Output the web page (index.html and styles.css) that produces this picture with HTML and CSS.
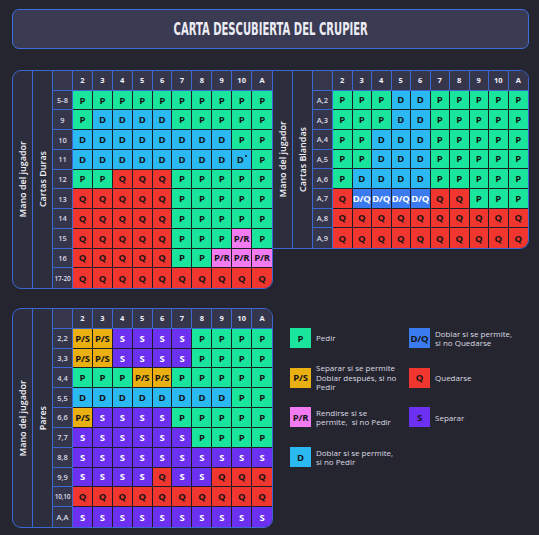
FILE: index.html
```html
<!DOCTYPE html>
<html lang="es">
<head>
<meta charset="utf-8">
<title>Carta descubierta del crupier</title>
<link rel="stylesheet" href="styles.css">
</head>
<body>
<div class="page">
  <header class="title"><h1>CARTA DESCUBIERTA DEL CRUPIER</h1></header>

  <section class="top">
    <div class="panel hard">
      <div class="lab"><span>Mano del jugador</span></div>
      <div class="lab"><span>Cartas Duras</span></div>
      <div class="grid">
        <span class="h"></span><span class="h">2</span><span class="h">3</span><span class="h">4</span><span class="h">5</span><span class="h">6</span><span class="h">7</span><span class="h">8</span><span class="h">9</span><span class="h">10</span><span class="h">A</span>
        <span class="h rh">5-8</span><span class="p">P</span><span class="p">P</span><span class="p">P</span><span class="p">P</span><span class="p">P</span><span class="p">P</span><span class="p">P</span><span class="p">P</span><span class="p">P</span><span class="p">P</span>
        <span class="h rh">9</span><span class="p">P</span><span class="d">D</span><span class="d">D</span><span class="d">D</span><span class="d">D</span><span class="p">P</span><span class="p">P</span><span class="p">P</span><span class="p">P</span><span class="p">P</span>
        <span class="h rh">10</span><span class="d">D</span><span class="d">D</span><span class="d">D</span><span class="d">D</span><span class="d">D</span><span class="d">D</span><span class="d">D</span><span class="d">D</span><span class="p">P</span><span class="p">P</span>
        <span class="h rh">11</span><span class="d">D</span><span class="d">D</span><span class="d">D</span><span class="d">D</span><span class="d">D</span><span class="d">D</span><span class="d">D</span><span class="d">D</span><span class="d">D<em class="dot"></em></span><span class="p">P</span>
        <span class="h rh">12</span><span class="p">P</span><span class="p">P</span><span class="q">Q</span><span class="q">Q</span><span class="q">Q</span><span class="p">P</span><span class="p">P</span><span class="p">P</span><span class="p">P</span><span class="p">P</span>
        <span class="h rh">13</span><span class="q">Q</span><span class="q">Q</span><span class="q">Q</span><span class="q">Q</span><span class="q">Q</span><span class="p">P</span><span class="p">P</span><span class="p">P</span><span class="p">P</span><span class="p">P</span>
        <span class="h rh">14</span><span class="q">Q</span><span class="q">Q</span><span class="q">Q</span><span class="q">Q</span><span class="q">Q</span><span class="p">P</span><span class="p">P</span><span class="p">P</span><span class="p">P</span><span class="p">P</span>
        <span class="h rh">15</span><span class="q">Q</span><span class="q">Q</span><span class="q">Q</span><span class="q">Q</span><span class="q">Q</span><span class="p">P</span><span class="p">P</span><span class="p">P</span><span class="r">P/R</span><span class="p">P</span>
        <span class="h rh">16</span><span class="q">Q</span><span class="q">Q</span><span class="q">Q</span><span class="q">Q</span><span class="q">Q</span><span class="p">P</span><span class="p">P</span><span class="r">P/R</span><span class="r">P/R</span><span class="r">P/R</span>
        <span class="h rh sm">17-20</span><span class="q">Q</span><span class="q">Q</span><span class="q">Q</span><span class="q">Q</span><span class="q">Q</span><span class="q">Q</span><span class="q">Q</span><span class="q">Q</span><span class="q">Q</span><span class="q">Q</span>
      </div>
    </div>

    <div class="panel soft">
      <div class="lab"><span>Mano del jugador</span></div>
      <div class="lab"><span>Cartas Blandas</span></div>
      <div class="grid">
        <span class="h"></span><span class="h">2</span><span class="h">3</span><span class="h">4</span><span class="h">5</span><span class="h">6</span><span class="h">7</span><span class="h">8</span><span class="h">9</span><span class="h">10</span><span class="h">A</span>
        <span class="h rh">A,2</span><span class="p">P</span><span class="p">P</span><span class="p">P</span><span class="d">D</span><span class="d">D</span><span class="p">P</span><span class="p">P</span><span class="p">P</span><span class="p">P</span><span class="p">P</span>
        <span class="h rh">A,3</span><span class="p">P</span><span class="p">P</span><span class="p">P</span><span class="d">D</span><span class="d">D</span><span class="p">P</span><span class="p">P</span><span class="p">P</span><span class="p">P</span><span class="p">P</span>
        <span class="h rh">A,4</span><span class="p">P</span><span class="p">P</span><span class="d">D</span><span class="d">D</span><span class="d">D</span><span class="p">P</span><span class="p">P</span><span class="p">P</span><span class="p">P</span><span class="p">P</span>
        <span class="h rh">A,5</span><span class="p">P</span><span class="p">P</span><span class="d">D</span><span class="d">D</span><span class="d">D</span><span class="p">P</span><span class="p">P</span><span class="p">P</span><span class="p">P</span><span class="p">P</span>
        <span class="h rh">A,6</span><span class="p">P</span><span class="d">D</span><span class="d">D</span><span class="d">D</span><span class="d">D</span><span class="p">P</span><span class="p">P</span><span class="p">P</span><span class="p">P</span><span class="p">P</span>
        <span class="h rh">A,7</span><span class="q">Q</span><span class="b">D/Q</span><span class="b">D/Q</span><span class="b">D/Q</span><span class="b">D/Q</span><span class="q">Q</span><span class="q">Q</span><span class="p">P</span><span class="p">P</span><span class="p">P</span>
        <span class="h rh">A,8</span><span class="q">Q</span><span class="q">Q</span><span class="q">Q</span><span class="q">Q</span><span class="q">Q</span><span class="q">Q</span><span class="q">Q</span><span class="q">Q</span><span class="q">Q</span><span class="q">Q</span>
        <span class="h rh">A,9</span><span class="q">Q</span><span class="q">Q</span><span class="q">Q</span><span class="q">Q</span><span class="q">Q</span><span class="q">Q</span><span class="q">Q</span><span class="q">Q</span><span class="q">Q</span><span class="q">Q</span>
      </div>
    </div>
  </section>

  <section class="bottom">
    <div class="panel pairs">
      <div class="lab"><span>Mano del jugador</span></div>
      <div class="lab"><span>Pares</span></div>
      <div class="grid">
        <span class="h"></span><span class="h">2</span><span class="h">3</span><span class="h">4</span><span class="h">5</span><span class="h">6</span><span class="h">7</span><span class="h">8</span><span class="h">9</span><span class="h">10</span><span class="h">A</span>
        <span class="h rh">2,2</span><span class="y">P/S</span><span class="y">P/S</span><span class="s">S</span><span class="s">S</span><span class="s">S</span><span class="s">S</span><span class="p">P</span><span class="p">P</span><span class="p">P</span><span class="p">P</span>
        <span class="h rh">3,3</span><span class="y">P/S</span><span class="y">P/S</span><span class="s">S</span><span class="s">S</span><span class="s">S</span><span class="s">S</span><span class="p">P</span><span class="p">P</span><span class="p">P</span><span class="p">P</span>
        <span class="h rh">4,4</span><span class="p">P</span><span class="p">P</span><span class="p">P</span><span class="y">P/S</span><span class="y">P/S</span><span class="p">P</span><span class="p">P</span><span class="p">P</span><span class="p">P</span><span class="p">P</span>
        <span class="h rh">5,5</span><span class="d">D</span><span class="d">D</span><span class="d">D</span><span class="d">D</span><span class="d">D</span><span class="d">D</span><span class="d">D</span><span class="d">D</span><span class="p">P</span><span class="p">P</span>
        <span class="h rh">6,6</span><span class="y">P/S</span><span class="s">S</span><span class="s">S</span><span class="s">S</span><span class="s">S</span><span class="p">P</span><span class="p">P</span><span class="p">P</span><span class="p">P</span><span class="p">P</span>
        <span class="h rh">7,7</span><span class="s">S</span><span class="s">S</span><span class="s">S</span><span class="s">S</span><span class="s">S</span><span class="s">S</span><span class="p">P</span><span class="p">P</span><span class="p">P</span><span class="p">P</span>
        <span class="h rh">8,8</span><span class="s">S</span><span class="s">S</span><span class="s">S</span><span class="s">S</span><span class="s">S</span><span class="s">S</span><span class="s">S</span><span class="s">S</span><span class="s">S</span><span class="s">S</span>
        <span class="h rh">9,9</span><span class="s">S</span><span class="s">S</span><span class="s">S</span><span class="s">S</span><span class="q">Q</span><span class="s">S</span><span class="s">S</span><span class="q">Q</span><span class="q">Q</span><span class="q">Q</span>
        <span class="h rh sm">10,10</span><span class="q">Q</span><span class="q">Q</span><span class="q">Q</span><span class="q">Q</span><span class="q">Q</span><span class="q">Q</span><span class="q">Q</span><span class="q">Q</span><span class="q">Q</span><span class="q">Q</span>
        <span class="h rh">A,A</span><span class="s">S</span><span class="s">S</span><span class="s">S</span><span class="s">S</span><span class="s">S</span><span class="s">S</span><span class="s">S</span><span class="s">S</span><span class="s">S</span><span class="s">S</span>
      </div>
    </div>

    <div class="legend">
      <div class="item"><span class="key p">P</span><p>Pedir</p></div>
      <div class="item"><span class="key b">D/Q</span><p>Doblar si se permite,<br>si no Quedarse</p></div>
      <div class="item"><span class="key y">P/S</span><p>Separar si se permite<br>Doblar después, si no<br>Pedir</p></div>
      <div class="item"><span class="key q">Q</span><p>Quedarse</p></div>
      <div class="item"><span class="key r">P/R</span><p>Rendirse si se<br>permite,&nbsp; si no Pedir</p></div>
      <div class="item"><span class="key s">S</span><p>Separar</p></div>
      <div class="item"><span class="key d">D</span><p>Doblar si se permite,<br>si no Pedir</p></div>
    </div>
  </section>
</div>
</body>
</html>
```

FILE: styles.css
```css
* { box-sizing: border-box; margin: 0; padding: 0; }

body {
  background: #25252f;
  font-family: "Open Sans", "Noto Sans", sans-serif;
  color: #e4e4ec;
}

.page {
  width: 539px;
  padding: 9px 10px 0 12px;
}

.title {
  height: 40px;
  border: 1px solid #3d6fe0;
  border-radius: 7px;
  background: #3a3a52;
  display: flex;
  align-items: center;
  justify-content: center;
}

.title h1 {
  font-family: "DejaVu Sans Condensed", "DejaVu Sans", sans-serif;
  font-stretch: condensed;
  font-weight: 700;
  font-size: 18px;
  line-height: 1;
  color: #ececf4;
  white-space: nowrap;
  transform: scaleX(0.62);
}

.top {
  display: flex;
  align-items: flex-start;
  margin-top: 21px;
}

.bottom {
  display: flex;
  align-items: flex-start;
  margin-top: 19px;
}

.panel {
  display: flex;
  border: 1px solid #3b67d2;
  background: #2c2d3d;
  overflow: hidden;
}

.hard {
  width: 261px;
  height: 219px;
  border-radius: 9px 0 9px 9px;
}

.soft {
  flex: 1;
  height: 179px;
  border-left: 0;
  border-radius: 0 9px 9px 0;
}

.pairs {
  width: 261px;
  height: 220px;
  border-radius: 9px;
}

.lab {
  width: 20px;
  flex: none;
  border-right: 1px solid #3b67d2;
  display: flex;
  align-items: center;
  justify-content: center;
}

.lab span {
  writing-mode: vertical-rl;
  transform: rotate(180deg);
  white-space: nowrap;
  font-size: 9px;
  font-weight: 600;
  color: #f4f4f8;
}

.grid {
  flex: 1;
  display: grid;
  grid-template-columns: 20px repeat(10, 1fr);
}

.hard .grid, .pairs .grid { grid-template-rows: repeat(11, 1fr); }
.soft .grid { grid-template-rows: repeat(9, 1fr); }

.grid span {
  display: flex;
  align-items: center;
  justify-content: center;
  border-right: 1px solid #1c1c22;
  border-bottom: 1px solid #1c1c22;
  font-weight: 700;
  font-size: 9.5px;
  color: #141414;
  white-space: nowrap;
  letter-spacing: -0.2px;
}

.grid span:nth-child(11n) { border-right: 0; }
.grid span:nth-last-child(-n+11) { border-bottom: 0; }

.grid .h {
  background: #35364c;
  border-color: #3b67d2;
  color: #f2f2f8;
  font-size: 7.5px;
  letter-spacing: 0;
}

.grid .rh { font-weight: 600; color: #dcdce6; }
.grid .sm { font-size: 6.5px; letter-spacing: -0.2px; }

.dot {
  width: 2px;
  height: 2px;
  border-radius: 50%;
  background: #141414;
  align-self: flex-start;
  margin: 5px 0 0 1px;
}

.p { background: #19e69c; }
.d { background: #2bb9f2; }
.q { background: #f0362f; }
.r { background: #f27bf2; }
.y { background: #eab012; }
.grid .s, .s { background: #6b30f0; color: #fff; }
.grid .b, .b { background: #3b7bf0; color: #fff; }

.legend {
  margin-left: 17px;
  padding-top: 20px;
  display: grid;
  grid-template-columns: 119px 1fr;
  grid-auto-rows: 20px;
  row-gap: 19.7px;
  align-content: start;
  flex: 1;
}

.item {
  display: flex;
  align-items: center;
  gap: 5px;
}

.key {
  width: 21px;
  height: 20px;
  flex: none;
  display: flex;
  align-items: center;
  justify-content: center;
  font-weight: 700;
  font-size: 9.5px;
  color: #141414;
  letter-spacing: -0.2px;
}

.item p {
  font-size: 8px;
  line-height: 9.5px;
  color: #dcdce4;
  white-space: nowrap;
}
```
